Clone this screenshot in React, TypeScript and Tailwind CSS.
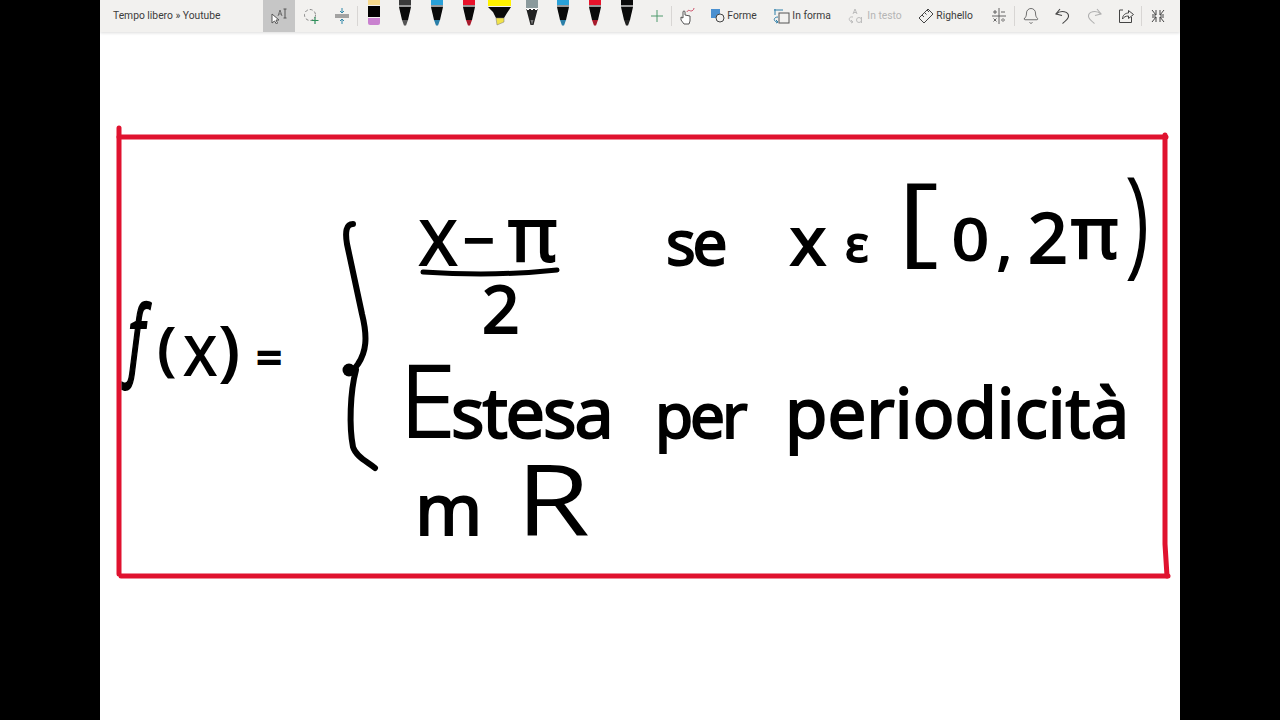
import React from "react";
import { Bell } from "lucide-react";

function Pen({ top, tip, band = "#9a9a9a" }: { top: string; tip: string; band?: string }) {
  return (
    <svg width="16" height="32" viewBox="0 0 16 32">
      <rect x="2" y="0" width="12" height="5" fill={top} />
      <rect x="2" y="5" width="12" height="2" fill={band} />
      <path d="M2 7h12l-3 13H5z" fill="#0a0a0a" />
      <path d="M5 20h6l-2 5.500H7z" fill={tip} />
    </svg>
  );
}

const Sep = () => <div className="w-px h-[20px] bg-[#d8d6d4] shrink-0" />;

function Btn({ children, className }: { children: React.ReactNode; className: string }) {
  return <div className={"flex items-center justify-center h-[32px] shrink-0 " + className}>{children}</div>;
}

function PenSlot({ children }: { children: React.ReactNode }) {
  return <div className="w-[31.6px] flex justify-center h-[32px] shrink-0">{children}</div>;
}

function Labeled({ icon, label, className }: { icon: React.ReactNode; label: string; className: string }) {
  return (
    <div className={"flex items-center h-[32px] shrink-0 gap-[1px] text-[10.3px] " + className}>
      {icon}
      <span>{label}</span>
    </div>
  );
}

const Ink = ({ className, children }: { className: string; children: React.ReactNode }) => (
  <span className={"absolute leading-none whitespace-pre text-black font-['Noto_Sans',sans-serif] [-webkit-text-stroke:2px_black] " + className}>
    {children}
  </span>
);

export default function App() {
  return (
    <div className="w-[1280px] h-[720px] bg-black flex justify-center overflow-hidden">
      <div className="w-[1080px] h-full bg-white flex flex-col font-['Roboto',sans-serif]">
        <div className="h-[32px] bg-[#f2f1ef] flex items-center text-[#3c3c3c] shrink-0 shadow-[0_1px_3px_rgba(0,0,0,0.14)] z-10">
          <div className="w-[163px] pl-[13px] text-[10.3px] shrink-0">Tempo libero » Youtube</div>
          <Btn className="w-[32px] bg-[#c6c6c6]">
            <svg width="18" height="18" viewBox="0 0 18 18" fill="none" stroke="#555">
              <path d="M2 7v9l2.500-2 2 3 1-1-1.500-3h3z" fill="#fff" strokeWidth="1" />
              <path d="M8 9l2-6 2 6M9 7h2" strokeWidth=".8" />
              <path d="M13.500 2h3M15 2v9M13.500 11h3" strokeWidth="1" />
            </svg>
          </Btn>
          <Btn className="w-[31px]">
            <svg width="18" height="18" viewBox="0 0 18 18" fill="none">
              <circle cx="8" cy="8" r="5.500" stroke="#888" strokeDasharray="3 2" />
              <path d="M13 10v7M9.500 13.500h7" stroke="#2f8f5b" strokeWidth="1.200" />
            </svg>
          </Btn>
          <Btn className="w-[31px]">
            <svg width="16" height="18" viewBox="0 0 16 18" fill="none" stroke="#2f86a8">
              <path d="M8 1v5M6 4l2 2 2-2M8 17v-5M6 14l2-2 2 2" />
              <path d="M1 8h14M1 10h14" stroke="#555" />
            </svg>
          </Btn>
          <Sep />
          <PenSlot>
            <svg width="16" height="32" viewBox="0 0 16 32">
              <rect x="2" y="0" width="12" height="5" fill="#f6d98c" />
              <rect x="2" y="6" width="12" height="11" fill="#000" />
              <path d="M2 18h12v5a2 2 0 0 1-2 2H4a2 2 0 0 1-2-2z" fill="#c981cf" />
            </svg>
          </PenSlot>
          <PenSlot><Pen top="#3a3a3a" tip="#555" /></PenSlot>
          <PenSlot><Pen top="#2aa1d8" tip="#2a7fa8" /></PenSlot>
          <PenSlot><Pen top="#e8132b" tip="#a81a2c" /></PenSlot>
          <PenSlot>
            <svg width="24" height="32" viewBox="0 0 24 32">
              <rect x="0" y="0" width="23" height="6" fill="#fff200" />
              <path d="M0 7h23l-4 6-3 5H8l-3-6z" fill="#0a0a0a" />
              <path d="M8 18h8v4l-7 3z" fill="#f1e24a" stroke="#777" strokeWidth=".5" />
            </svg>
          </PenSlot>
          <PenSlot>
            <svg width="16" height="32" viewBox="0 0 16 32">
              <rect x="2" y="0" width="12" height="8" fill="#8b9a9c" />
              <path d="M2 8l2 2 2-2 2 2 2-2 2 2 2-2-4.500 17h-3z" fill="#222" />
              <path d="M2 8l2 2 2-2 2 2 2-2 2 2 2-2" fill="none" stroke="#fff" strokeWidth="1" />
              <path d="M6.500 20h3L8 25z" fill="#777" />
            </svg>
          </PenSlot>
          <PenSlot><Pen top="#2aa1d8" tip="#2a7fa8" /></PenSlot>
          <PenSlot><Pen top="#e8132b" tip="#a81a2c" /></PenSlot>
          <PenSlot><Pen top="#0a0a0a" tip="#222" /></PenSlot>
          <Btn className="w-[29px]">
            <svg width="14" height="14" viewBox="0 0 14 14" stroke="#4f9a6d" fill="none"><path d="M7 1v12M1 7h12" /></svg>
          </Btn>
          <Sep />
          <Btn className="w-[30px]">
            <svg width="18" height="20" viewBox="0 0 18 20" fill="none" stroke="#444">
              <path d="M6 18l-3-4V11l2 1V6a1 1 0 0 1 2 0v3l5 1v5l-1 3z" fill="#fff" strokeWidth=".9" />
              <path d="M9 6c1-3 3-1 4-1s3-1 3-3" stroke="#c8405a" strokeWidth=".9" />
            </svg>
          </Btn>
          <Labeled
            className="w-[61px] pl-[8px]"
            label="Forme"
            icon={
              <svg width="16" height="16" viewBox="0 0 16 16" fill="none">
                <rect x="1" y="1" width="9" height="9" fill="#4a90d0" />
                <circle cx="10" cy="10" r="4" fill="#f2f1ef" stroke="#444" />
              </svg>
            }
          />
          <Labeled
            className="w-[76px] pl-[10px]"
            label="In forma"
            icon={
              <svg width="17" height="17" viewBox="0 0 17 17" fill="none" stroke="#2f7fa8" className="mr-[1px]">
                <path d="M1 2h9M2 1v6" />
                <rect x="6" y="5" width="10" height="10" stroke="#555" />
                <path d="M5 9c-5 0-5 5 0 5M3 12l2 2-2 1" />
              </svg>
            }
          />
          <Labeled
            className="w-[71px] pl-[8px] text-[#b5b5b5]"
            label="In testo"
            icon={
              <svg width="17" height="17" viewBox="0 0 17 17" fill="none" stroke="#bdbdbd" className="mr-[2px]">
                <path d="M6 6l2-5 2 5M6.500 4.500h3" />
                <path d="M6 9c-5-1-5 5 0 5M4 12l2 2-2 1" />
                <circle cx="12" cy="12" r="2.500" />
                <path d="M14.500 9v6" />
              </svg>
            }
          />
          <Labeled
            className="w-[73px] pl-[8px] gap-[2px]"
            label="Righello"
            icon={
              <svg width="16" height="16" viewBox="0 0 16 16" fill="none" stroke="#444">
                <path d="M1 10L10 1l5 5-9 9zM4 7l2 2M6.500 4.500l2 2M9 2l2 2" />
              </svg>
            }
          />
          <Btn className="w-[31px]">
            <svg width="16" height="16" viewBox="0 0 16 16" fill="none" stroke="#555" strokeWidth=".9">
              <path d="M8 0v16M1 8h14M2 4h4M4 2v4M10 4h4M2.500 10.500l3 3M5.500 10.500l-3 3M10 12h4" />
              <path d="M12 10v.8M12 13.200v.8" />
            </svg>
          </Btn>
          <Sep />
          <Btn className="w-[32px]"><Bell size={18} strokeWidth={1} color="#444" /></Btn>
          <Btn className="w-[31px]">
            <svg width="18" height="18" viewBox="0 0 18 18" fill="none" stroke="#444" strokeWidth="1.100">
              <path d="M6 2L2 7l6 1.500" />
              <path d="M2 7C7 2.500 15 4.500 14.500 9.500C14.200 12 11 14.500 8.500 16.500" />
            </svg>
          </Btn>
          <Btn className="w-[32px]">
            <svg width="18" height="18" viewBox="0 0 18 18" fill="none" stroke="#b0b0b0" strokeWidth="1.100">
              <path d="M12 2l4 5-6 1.500" />
              <path d="M16 7C11 2.500 3 4.500 3.500 9.500C3.800 12 7 14.500 9.500 16.500" />
            </svg>
          </Btn>
          <Btn className="w-[31px]">
            <svg width="16" height="16" viewBox="0 0 16 16" fill="none" stroke="#444">
              <path d="M5 2H1.500v12.500h12V9" />
              <path d="M4.500 11c0-4 3-6 6-6V2.500l5 4-5 4V8c-3 0-4.500 1-6 3z" />
            </svg>
          </Btn>
          <Sep />
          <Btn className="w-[31px]">
            <svg width="14" height="14" viewBox="0 0 14 14" fill="none" stroke="#444">
              <path d="M1 1l4 5M5 1v5H1M13 1L9 6M9 1v5h4M1 13l4-5M5 13V8H1M13 13L9 8M9 13V8h4" />
            </svg>
          </Btn>
        </div>

        <div className="relative flex-1">
          <svg className="absolute inset-0" width="1080" height="688" viewBox="0 0 1080 688" fill="none" strokeLinecap="round" strokeLinejoin="round">
            <g stroke="#e0122f" strokeWidth="5">
              <path d="M19 96V542" />
              <path d="M19 105H1066" />
              <path d="M1065 103V512L1067 544" />
              <path d="M21 544H1068" />
            </g>
            <g stroke="#000" strokeWidth="6">
              <path d="M253 192C246 192 245 200 247 212L262 282C268 306 266 320 258 332L252 340" />
              <path d="M256 338C250 360 249 395 253 415C256 425 268 430 275 436" />
              <path d="M323 240C370 243 420 242 457 238" strokeWidth="5" />
            </g>
            <circle cx="249" cy="338" r="6.500" fill="#000" />
          </svg>

          <Ink className="left-[28px] top-[259px] text-[88px] italic font-['Liberation_Serif',serif] origin-left [transform:scaleX(0.6)]">f</Ink>
          <Ink className="left-[58px] top-[287px] text-[56px]">(</Ink>
          <Ink className="left-[85px] top-[297px] text-[52px]">X</Ink>
          <Ink className="left-[120px] top-[285px] text-[64px]">)</Ink>
          <Ink className="left-[156px] top-[301px] text-[46px]">=</Ink>

          <Ink className="left-[320px] top-[178px] text-[62px]">X</Ink>
          <Ink className="left-[363px] top-[179px] text-[55px]">−</Ink>
          <Ink className="left-[408px] top-[163px] text-[75px]">π</Ink>
          <Ink className="left-[382px] top-[242px] text-[66px]">2</Ink>

          <Ink className="left-[566px] top-[178px] text-[62px] tracking-[-0.05em]">se</Ink>
          <Ink className="left-[690px] top-[173px] text-[68px]">x</Ink>
          <Ink className="left-[745px] top-[186px] text-[50px]">ε</Ink>
          <Ink className="left-[798px] top-[136px] text-[96px] font-light origin-left [transform:scaleX(1.3)]">[</Ink>
          <Ink className="left-[852px] top-[178px] text-[56px] origin-left [transform:scaleX(1.15)]">0</Ink>
          <Ink className="left-[897px] top-[182px] text-[56px]">,</Ink>
          <Ink className="left-[928px] top-[169px] text-[70px]">2</Ink>
          <Ink className="left-[971px] top-[162px] text-[72px]">π</Ink>
          <Ink className="left-[1026px] top-[127px] text-[116px] font-light origin-left [transform:scaleX(0.7)]">)</Ink>

          <Ink className="left-[300px] top-[316px] text-[100px] font-light">E</Ink>
          <Ink className="left-[351px] top-[344px] text-[70px] tracking-[-0.03em]">stesa</Ink>
          <Ink className="left-[555px] top-[351px] text-[62px] tracking-[-0.05em]">per</Ink>
          <Ink className="left-[685px] top-[345px] text-[69px]">periodicità</Ink>

          <Ink className="left-[315px] top-[439px] text-[72px]">m</Ink>
          <Ink className="left-[417px] top-[419px] text-[95px] font-light origin-left [transform:scaleX(1.25)]">R</Ink>
        </div>
      </div>
    </div>
  );
}
